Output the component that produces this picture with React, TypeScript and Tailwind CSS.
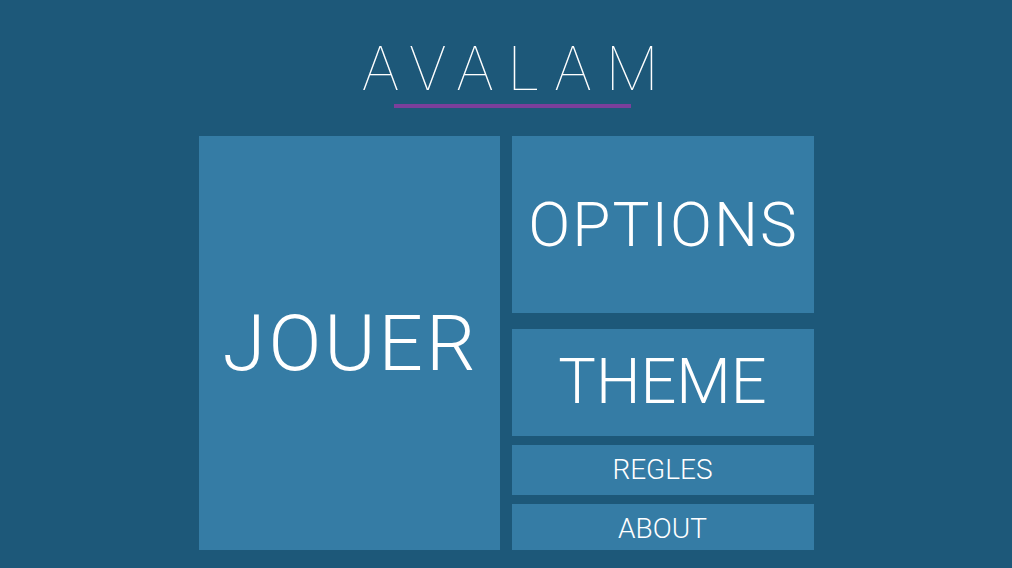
export default function App() {
  const tile = 'bg-[#357ca5] flex items-center justify-center text-white font-light'

  return (
    <div className="w-[1012px] h-[568px] bg-[#1d5879] overflow-hidden flex flex-col items-center" style={{ fontFamily: 'Roboto, "Liberation Sans", sans-serif' }}>
      {/* titre */}
      <div className="mt-[38px] ml-[8px] flex flex-col items-center">
        <h1 className="h-[60px] text-[60px] leading-[60px] font-thin text-white tracking-[13px] pl-[13px]" style={{ fontFamily: 'Inter, "Liberation Sans", sans-serif' }}>
          AVALAM
        </h1>
        <div className="mt-[6px] ml-[5px] h-[4px] w-[237px] bg-[#7b3f9b]" />
      </div>

      {/* menu */}
      <div className="mt-[28px] grid grid-cols-[301px_302px] gap-x-[12px] h-[414px]">
        <button className={`${tile} text-[78px] tracking-[3px] pl-[3px]`}>JOUER</button>
        <div className="flex flex-col">
          <button className={`${tile} h-[177px] text-[62px] tracking-[2px] pl-[2px]`}>OPTIONS</button>
          <button className={`${tile} h-[107px] mt-[16px] text-[63px]`}>THEME</button>
          <button className={`${tile} h-[50px] mt-[9px] text-[28px]`}>REGLES</button>
          <button className={`${tile} h-[46px] mt-[9px] pt-[3px] text-[28px]`}>ABOUT</button>
        </div>
      </div>
    </div>
  )
}
